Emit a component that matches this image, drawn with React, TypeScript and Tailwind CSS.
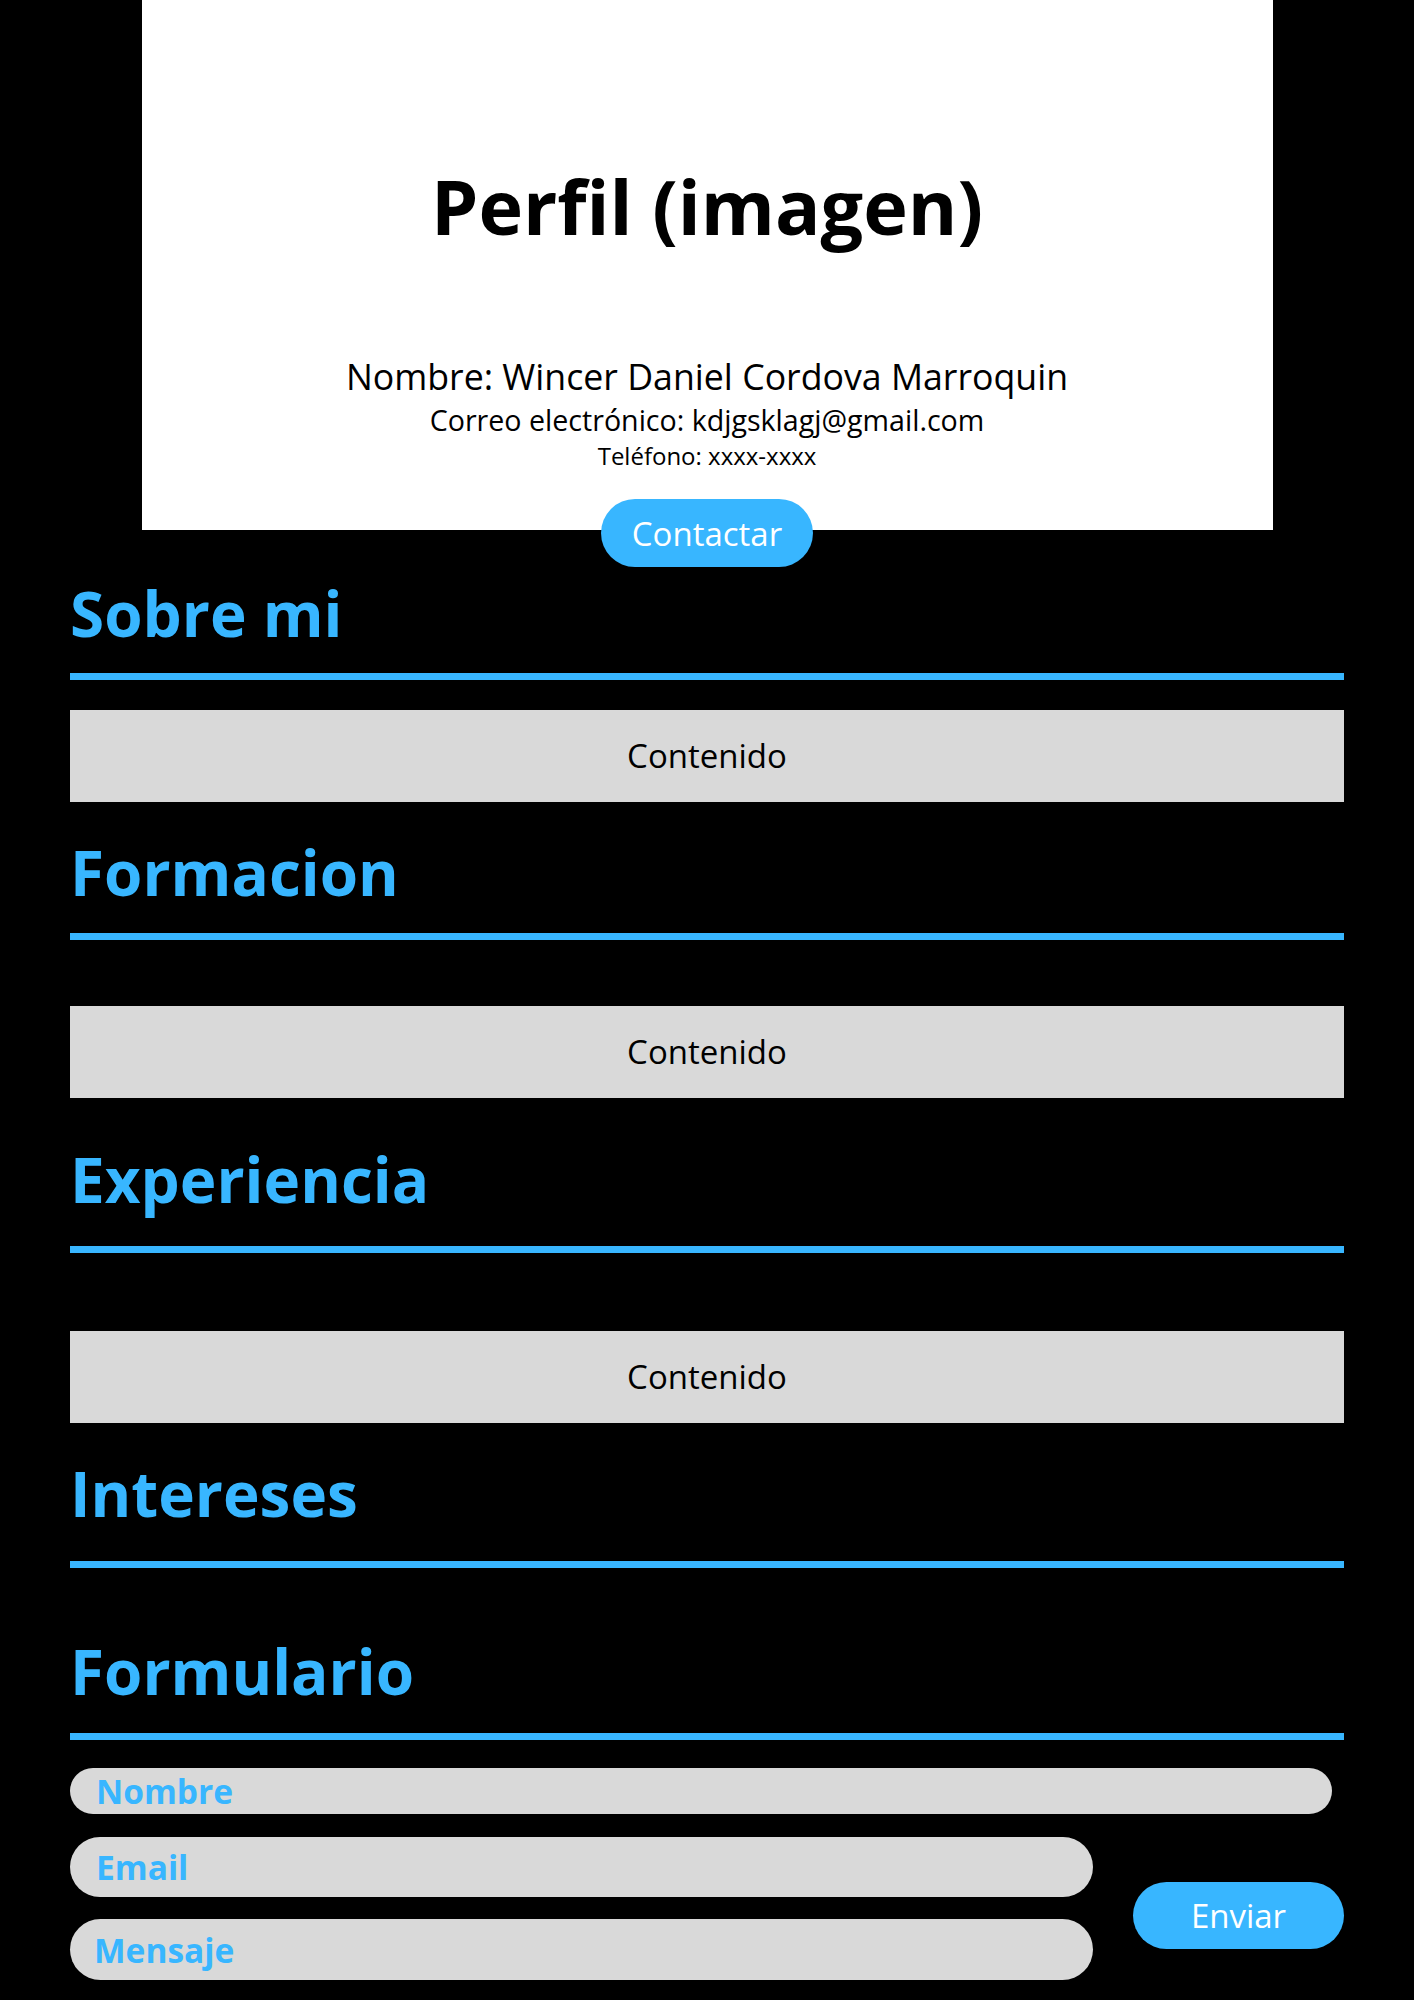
import React from 'react';

const Section = ({ title, top, lineTop, children }: { title: string; top: string; lineTop: string; children?: React.ReactNode }) => (
  <section>
    <h2 className={`${top} text-[62px] leading-none font-bold text-[#38b6ff]`}>{title}</h2>
    <div className={`${lineTop} h-[7px] bg-[#38b6ff]`}></div>
    {children}
  </section>
);

const Box = ({ top }: { top: string }) => (
  <div className={`${top} h-[92px] bg-[#d9d9d9] flex items-center justify-center text-[33px] text-black`}>Contenido</div>
);

export default function App() {
  return (
    <div className="min-h-[2000px] bg-black font-['Open_Sans',sans-serif]">
      {/* tarjeta de perfil */}
      <div className="mx-auto w-[1131px] bg-white pt-[155px] pb-[58px] text-center text-black">
        <h1 className="text-[75.5px] leading-[102px] font-bold">Perfil (imagen)</h1>
        <div className="mt-[95px]">
          <p className="text-[35.7px] leading-[49px]">Nombre: Wincer Daniel Cordova Marroquin</p>
          <p className="text-[28.6px] leading-[38px]">Correo electrónico: kdjgsklagj@gmail.com</p>
          <p className="text-[24px] leading-[33px]">Teléfono: xxxx-xxxx</p>
        </div>
      </div>
      <div className="relative z-10 -mt-[31px] flex justify-center">
        <button className="w-[212px] h-[68px] rounded-full bg-[#38b6ff] text-white text-[33px] leading-none">Contactar</button>
      </div>

      <div className="px-[70px]">
        <Section title="Sobre mi" top="mt-[15px]" lineTop="mt-[29px]">
          <Box top="mt-[30px]" />
        </Section>
        <Section title="Formacion" top="mt-[39px]" lineTop="mt-[30px]">
          <Box top="mt-[66px]" />
        </Section>
        <Section title="Experiencia" top="mt-[50px]" lineTop="mt-[36px]">
          <Box top="mt-[78px]" />
        </Section>
        <Section title="Intereses" top="mt-[39px]" lineTop="mt-[37px]" />
        <Section title="Formulario" top="mt-[72px]" lineTop="mt-[31px]">
          <form className="mt-[28px]" onSubmit={e => e.preventDefault()}>
            <input
              type="text"
              placeholder="Nombre"
              className="block w-[1262px] h-[46px] rounded-full bg-[#d9d9d9] pl-[26px] text-[33.5px] placeholder:text-[#38b6ff] placeholder:font-bold outline-none"
            />
            <div className="mt-[23px] flex items-start">
              <div className="w-[1023px] flex flex-col gap-[22px]">
                <input
                  type="email"
                  placeholder="Email"
                  className="block w-full h-[60px] rounded-full bg-[#d9d9d9] pl-[26px] text-[33.5px] placeholder:text-[#38b6ff] placeholder:font-bold outline-none"
                />
                <input
                  type="text"
                  placeholder="Mensaje"
                  className="block w-full h-[61px] rounded-full bg-[#d9d9d9] pl-[24px] text-[33.5px] placeholder:text-[#38b6ff] placeholder:font-bold outline-none"
                />
              </div>
              <button type="submit" className="ml-auto mt-[45px] w-[211px] h-[67px] rounded-full bg-[#38b6ff] text-white text-[33px] leading-none">Enviar</button>
            </div>
          </form>
        </Section>
      </div>
    </div>
  );
}
